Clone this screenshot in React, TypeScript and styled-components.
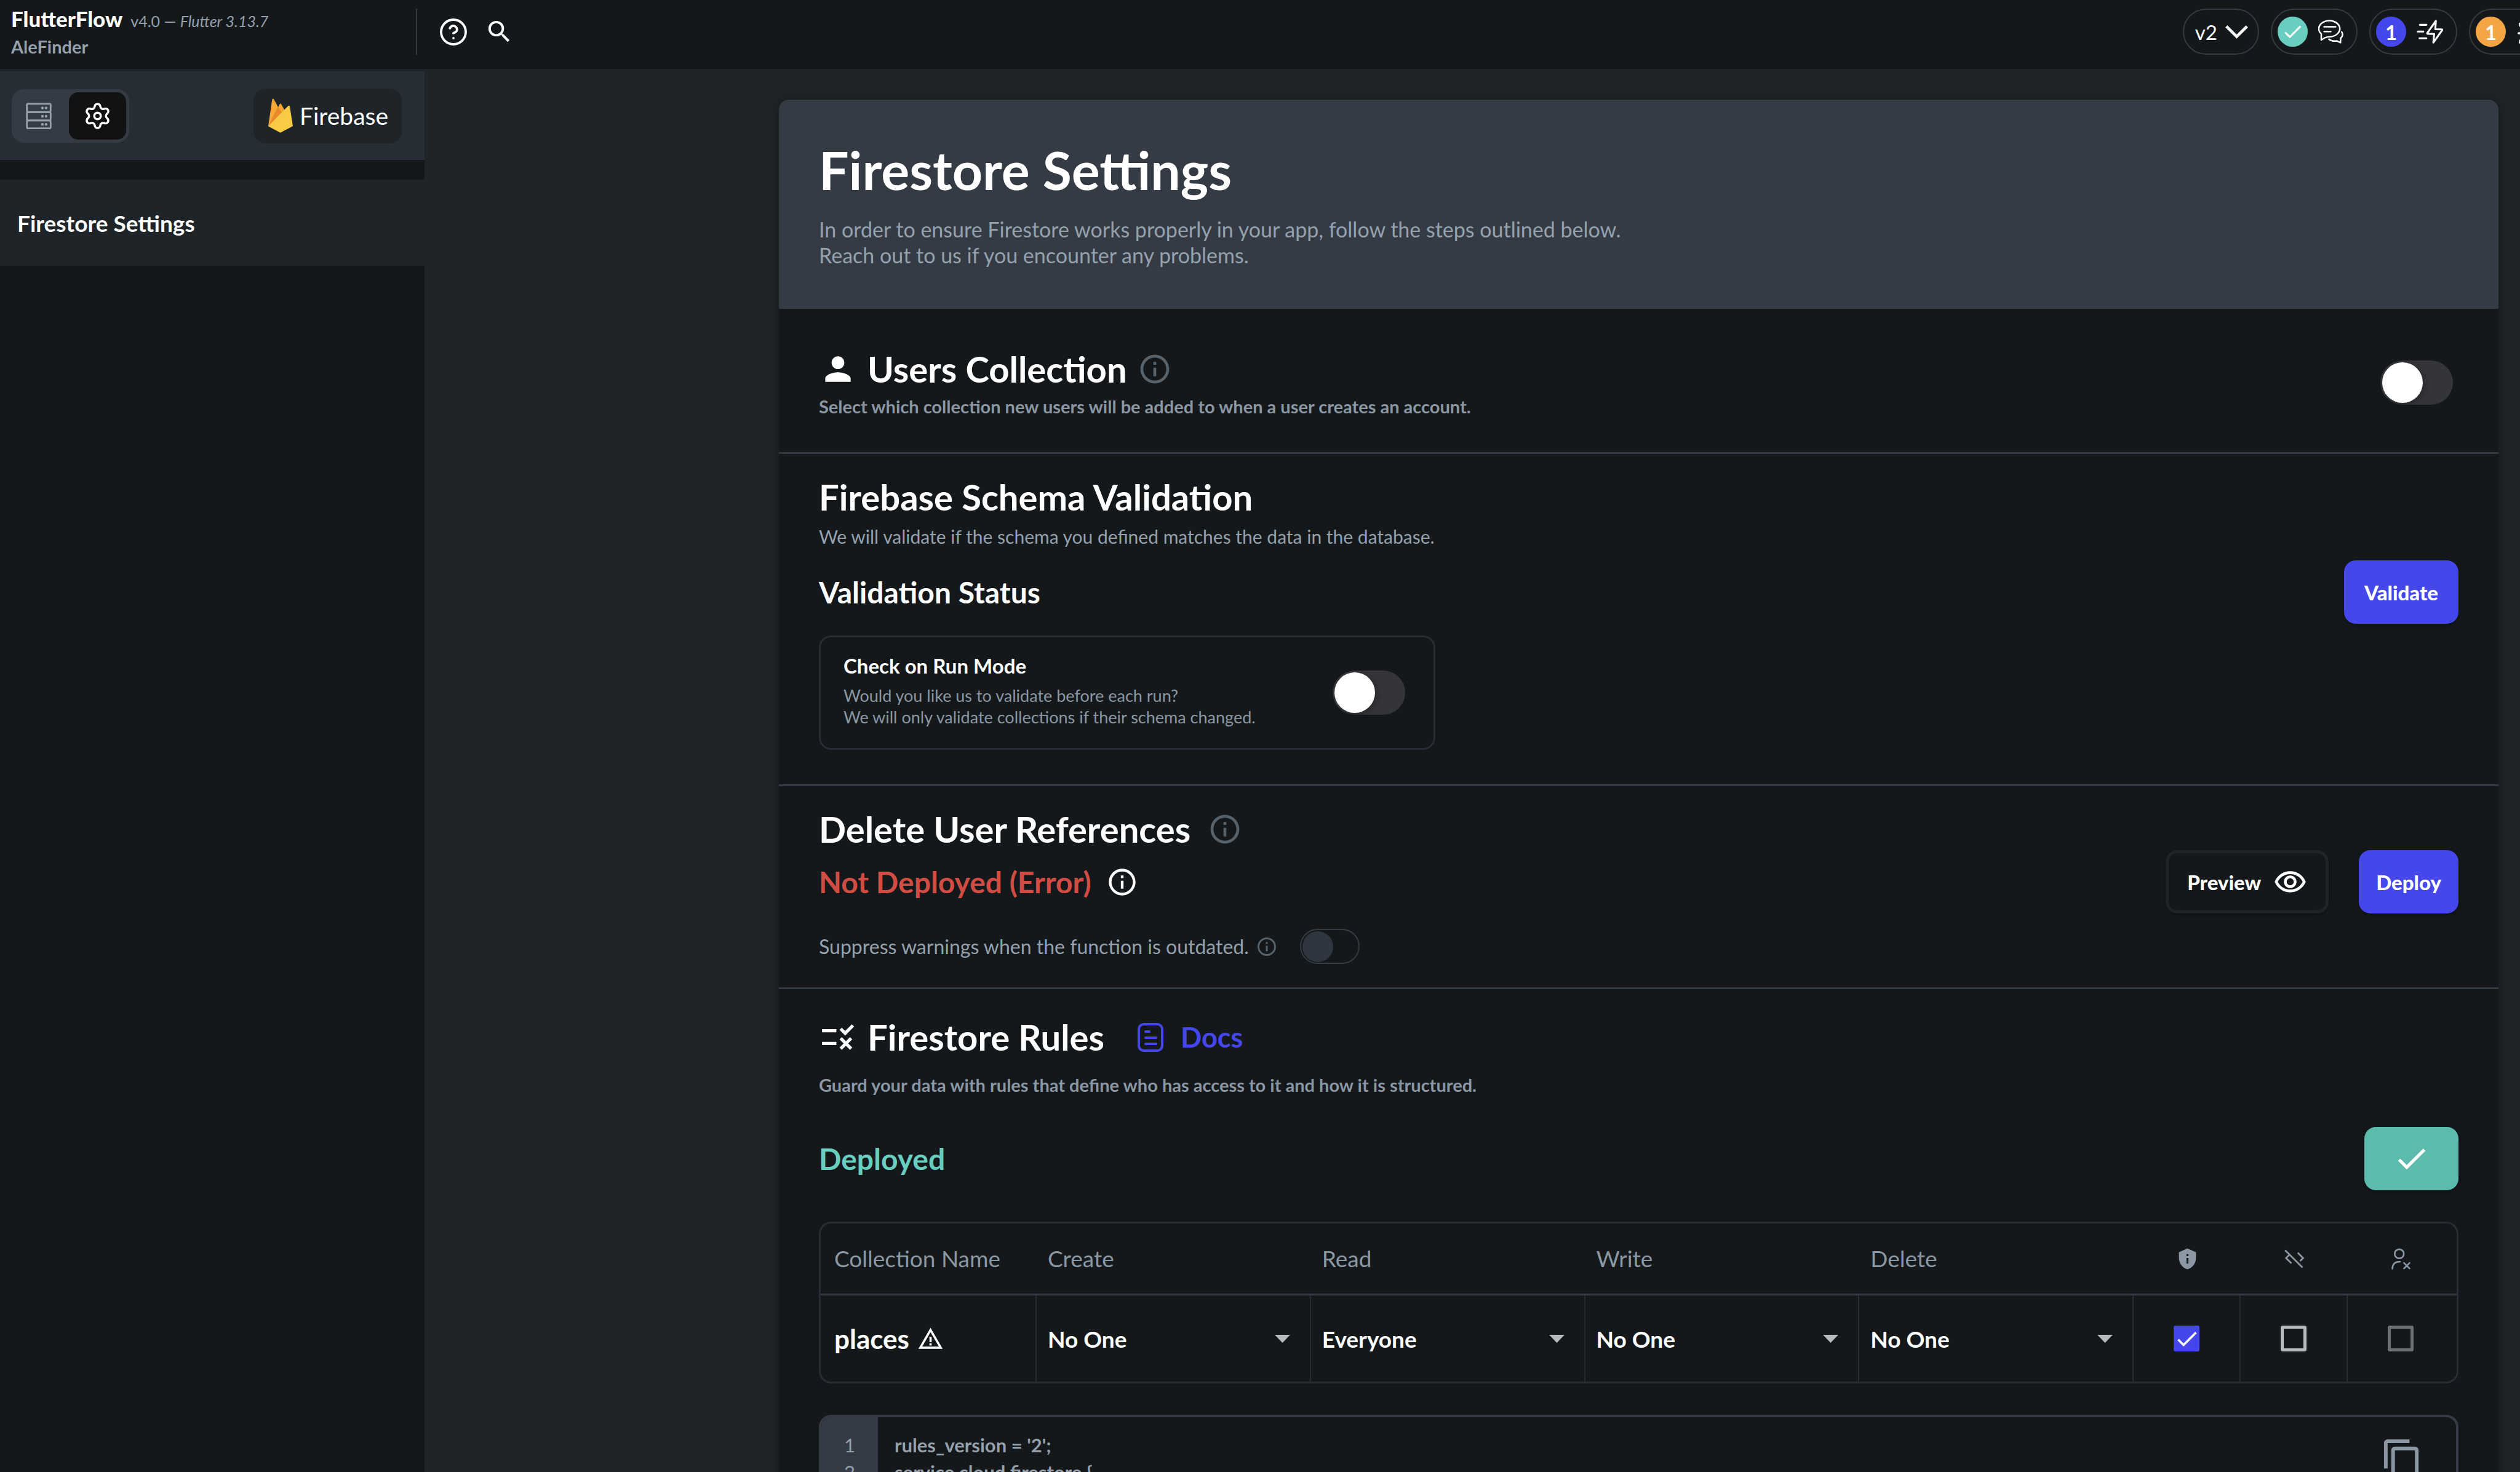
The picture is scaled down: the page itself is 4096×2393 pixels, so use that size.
import React from "react";
import styled, { createGlobalStyle, css } from "styled-components";
import {
  MdCheck,
  MdContentCopy,
  MdInfoOutline,
  MdOutlineRemoveRedEye,
  MdPerson,
  MdPrivacyTip,
  MdRule,
  MdSearch,
  MdWarningAmber,
} from "react-icons/md";
import { Bug, CircleHelp } from "lucide-react";

const color = {
  page: "#1e2428",
  panel: "#14181b",
  header: "#343b45",
  bar: "#262d34",
  line: "#323a43",
  faint: "#262b30",
  text: "#ffffff",
  muted: "#95a1ac",
  soft: "#8b97a2",
  dim: "#57636c",
  primary: "#4547eb",
  teal: "#69cebf",
  tealDark: "#5dbbad",
  orange: "#f3a545",
  red: "#d14c42",
  control: "#b9bbbc",
  disabled: "#6c7072",
};

const GlobalStyle = createGlobalStyle`
  *, *::before, *::after { box-sizing: border-box; }
  body {
    margin: 0;
    background: ${color.page};
    color: ${color.text};
    font-family: Lato, "Open Sans", sans-serif;
  }
  h1, h2, h3, h4, p, ol { margin: 0; padding: 0; }
  button, input, select { font-family: inherit; margin: 0; }
  svg { display: block; flex: none; }
`;

const Shell = styled.div`
  display: flex;
  flex-direction: column;
  height: 100vh;
  overflow: hidden;
`;

/* ---------- top bar ---------- */

const TopBar = styled.header`
  display: flex;
  flex: none;
  height: 112px;
  padding: 14px 0 23px;
  background: ${color.panel};
  overflow: hidden;
`;

const Brand = styled.div`
  display: flex;
  flex-direction: column;
  justify-content: center;
  gap: 8px;
  width: 678px;
  padding-left: 18px;
  border-right: 2px solid ${color.line};
`;

const BrandLine = styled.div`
  display: flex;
  align-items: baseline;
  gap: 13px;
  font-size: 35px;
  line-height: 36px;
  font-weight: 900;
`;

const Version = styled.span`
  font-size: 25px;
  font-weight: 400;
  color: ${color.muted};
`;

const ProjectName = styled.div`
  font-size: 29px;
  line-height: 32px;
  font-weight: 700;
  color: ${color.muted};
`;

const BarTools = styled.div`
  display: flex;
  align-items: center;
  gap: 27px;
  padding-left: 35px;
`;

const IconButton = styled.button`
  display: flex;
  padding: 0;
  border: 0;
  background: none;
  color: ${color.text};
`;

const Pills = styled.div`
  display: flex;
  gap: 19px;
  margin-left: auto;
  margin-right: -63px;
`;

const Pill = styled.button<{ $gap?: number }>`
  display: flex;
  flex: none;
  align-items: center;
  gap: ${(p) => p.$gap ?? 17}px;
  height: 75px;
  padding: 0 21px 0 9px;
  border: 2px solid ${color.line};
  border-radius: 38px;
  background: none;
  color: ${color.text};
  font-size: 33px;
`;

const VersionPill = styled(Pill)`
  padding: 0 16px 0 18px;
`;

const Dot = styled.span<{ $bg: string }>`
  display: flex;
  align-items: center;
  justify-content: center;
  width: 49px;
  height: 49px;
  border-radius: 50%;
  background: ${(p) => p.$bg};
  font-size: 33px;
  font-weight: 700;
`;

/* ---------- sidebar ---------- */

const Body = styled.div`
  display: flex;
  flex: 1;
  min-height: 0;
`;

const Sidebar = styled.aside`
  flex: none;
  width: 690px;
  margin-top: 4px;
  background: ${color.panel};
`;

const SideHeader = styled.div`
  display: flex;
  align-items: center;
  justify-content: space-between;
  height: 144px;
  padding: 0 37px 0 19px;
  background: ${color.bar};
`;

const Segments = styled.div`
  display: flex;
  padding: 5px 5px 5px 0;
  border-radius: 20px;
  background: ${color.header};
`;

const Segment = styled.button<{ $active?: boolean }>`
  display: flex;
  align-items: center;
  justify-content: center;
  width: 93px;
  height: 77px;
  padding: 0;
  border: 0;
  border-radius: 15px;
  background: ${(p) => (p.$active ? "#101213" : "transparent")};
  color: ${(p) => (p.$active ? color.text : color.muted)};
  &:first-child {
    padding-right: 5px;
  }
`;

const FirebaseButton = styled.button`
  display: flex;
  align-items: center;
  gap: 11px;
  height: 89px;
  padding: 0 22px 0 24px;
  border: 0;
  border-radius: 20px;
  background: ${color.page};
  color: ${color.text};
  font-size: 39px;
`;

const SideLink = styled.a`
  display: flex;
  align-items: center;
  height: 140px;
  margin-top: 32px;
  padding: 0 28px;
  background: ${color.page};
  color: ${color.text};
  font-size: 37px;
  font-weight: 700;
  text-decoration: none;
`;

/* ---------- main card ---------- */

const Main = styled.main`
  flex: 1;
  min-width: 0;
  padding: 50px 35px 0 576px;
`;

const Card = styled.div`
  border-radius: 16px 16px 0 0;
  background: ${color.panel};
  box-shadow: 0 0 24px rgba(0, 0, 0, 0.3);
`;

const CardHeader = styled.div`
  padding: 64px 65px 66px;
  border-radius: 16px 16px 0 0;
  background: ${color.header};
`;

const PageTitle = styled.h1`
  font-size: 86px;
  line-height: 100px;
  font-weight: 700;
`;

const Lead = styled.p`
  margin-top: 26px;
  font-size: 34px;
  line-height: 42px;
  color: ${color.muted};
`;

const Section = styled.section<{ $top: number; $bottom: number }>`
  padding: ${(p) => p.$top}px 65px ${(p) => p.$bottom}px;
  border-bottom: 3px solid ${color.line};
`;

const Row = styled.div<{ $mt?: number; $gap?: number }>`
  display: flex;
  align-items: center;
  gap: ${(p) => p.$gap ?? 0}px;
  margin-top: ${(p) => p.$mt ?? 0}px;
`;

const SplitRow = styled(Row)`
  justify-content: space-between;
`;

const SectionTitle = styled.h2`
  font-size: 58px;
  line-height: 68px;
  font-weight: 700;
`;

const StatusText = styled.h3<{ $color?: string }>`
  font-size: 48px;
  line-height: 54px;
  font-weight: 700;
  color: ${(p) => p.$color ?? color.text};
`;

const BoldNote = styled.p<{ $mt: number }>`
  margin-top: ${(p) => p.$mt}px;
  font-size: 29px;
  line-height: 32px;
  font-weight: 700;
  color: ${color.soft};
`;

const Note = styled.p`
  margin-top: 12px;
  font-size: 30px;
  line-height: 36px;
  color: ${color.muted};
`;

const Tint = styled.span<{ $color: string }>`
  display: flex;
  color: ${(p) => p.$color};
`;

const Switch = styled.input.attrs({ type: "checkbox", role: "switch" })<{
  $small?: boolean;
}>`
  appearance: none;
  display: flex;
  align-items: center;
  flex: none;
  ${(p) =>
    p.$small
      ? css`
          width: 97px;
          height: 57px;
          padding: 0 2px;
          border: 2px solid ${color.header};
          border-radius: 29px;
        `
      : css`
          width: 118px;
          height: 72px;
          padding: 0 3px;
          border-radius: 36px;
          background: #353539;
        `}
  &::before {
    content: "";
    width: ${(p) => (p.$small ? 50 : 66)}px;
    height: ${(p) => (p.$small ? 50 : 66)}px;
    border-radius: 50%;
    background: ${(p) => (p.$small ? "#2e3640" : "#ffffff")};
    box-shadow: ${(p) => (p.$small ? "none" : "4px 4px 10px rgba(0, 0, 0, 0.2)")};
  }
`;

const SwitchSlot = styled.div`
  display: flex;
  padding-right: 9px;
`;

const Button = styled.button<{ $bg: string; $pad: number }>`
  display: flex;
  align-items: center;
  justify-content: center;
  height: 103px;
  padding: 0 ${(p) => p.$pad}px;
  border: 0;
  border-radius: 19px;
  background: ${(p) => p.$bg};
  color: ${color.text};
  font-size: 33px;
  font-weight: 900;
  box-shadow: 0 3px 8px rgba(0, 0, 0, 0.25);
`;

const OutlineButton = styled(Button)`
  gap: 20px;
  border: 5px solid ${color.page};
`;

const RunModeBox = styled.div`
  display: flex;
  align-items: center;
  justify-content: space-between;
  width: 1002px;
  margin-top: 19px;
  padding: 26px 46px 26px 37px;
  border: 3px solid ${color.bar};
  border-radius: 20px;
`;

const RunModeText = styled.div`
  padding-bottom: 7px;
`;

const RunModeTitle = styled.label`
  display: block;
  font-size: 33px;
  line-height: 40px;
  font-weight: 700;
`;

const RunModeNote = styled.p`
  margin-top: 11px;
  font-size: 27px;
  line-height: 35px;
  color: ${color.soft};
`;

const SuppressLabel = styled.label`
  display: flex;
  align-items: center;
  gap: 11px;
  font-size: 32px;
  line-height: 40px;
  color: ${color.muted};
`;

const DocsLink = styled.a`
  display: flex;
  align-items: center;
  gap: 28px;
  margin-left: 37px;
  color: ${color.primary};
  font-size: 45px;
  line-height: 54px;
  font-weight: 700;
  text-decoration: none;
`;

const Rules = styled.section`
  padding: 44px 65px 0;
`;

/* ---------- rules table ---------- */

const TableFrame = styled.div`
  margin-top: 51px;
  border: 3px solid ${color.bar};
  border-radius: 20px;
  overflow: hidden;
`;

const Table = styled.table`
  width: 100%;
  table-layout: fixed;
  border-collapse: separate;
  border-spacing: 0;
`;

const Col = styled.col<{ $w?: number }>`
  width: ${(p) => (p.$w ? `${p.$w}px` : "auto")};
`;

const HeadCell = styled.th<{ $center?: boolean; $first?: boolean }>`
  height: 117px;
  padding: 0 0 0 ${(p) => (p.$center ? 0 : p.$first ? 22 : 18)}px;
  border-bottom: 3px solid ${color.line};
  color: ${color.soft};
  font-size: 37px;
  line-height: 44px;
  font-weight: 400;
  text-align: left;
  white-space: nowrap;
`;

const Centered = styled.div<{ $end?: boolean }>`
  display: flex;
  align-items: center;
  justify-content: center;
  padding-right: ${(p) => (p.$end ? 5 : 0)}px;
`;

const Cell = styled.td`
  height: 140px;
  padding: 0;
  border-right: 2px solid ${color.faint};
  &:last-child {
    border-right: 0;
  }
`;

const CollectionName = styled.div`
  display: flex;
  align-items: center;
  gap: 13px;
  padding-left: 22px;
  font-size: 44px;
  line-height: 54px;
  font-weight: 700;
`;

const SelectWrap = styled.div`
  display: grid;
  grid-template-columns: 1fr 57px;
  align-items: center;
  color: ${color.control};
`;

const Select = styled.select`
  appearance: none;
  grid-area: 1 / 1 / 2 / 3;
  width: 100%;
  height: 138px;
  padding: 0 0 0 18px;
  border: 0;
  background: transparent;
  color: ${color.text};
  font-size: 37px;
  font-weight: 700;
`;

const SelectArrow = styled.svg`
  grid-area: 1 / 2 / 2 / 3;
  pointer-events: none;
`;

const CheckMark = styled.label<{ $color: string; $checked?: boolean }>`
  display: grid;
  width: 42px;
  height: 42px;
  border: ${(p) => (p.$checked ? 0 : 5)}px solid ${(p) => p.$color};
  border-radius: 3px;
  background: ${(p) => (p.$checked ? p.$color : "transparent")};
  place-items: center;
  input,
  svg {
    grid-area: 1 / 1;
  }
  input {
    appearance: none;
    width: 100%;
    height: 100%;
  }
`;

/* ---------- code viewer ---------- */

const CodeBox = styled.div`
  display: flex;
  margin-top: 51px;
  height: 620px;
  border: 4px solid ${color.header};
  border-radius: 20px 20px 0 0;
  overflow: hidden;
  font-size: 31px;
  line-height: 44px;
  color: ${color.muted};
`;

const Gutter = styled.ol`
  width: 92px;
  padding: 23px 0 0;
  background: ${color.header};
  list-style: none;
  text-align: center;
`;

const Code = styled.pre`
  flex: 1;
  margin: 0;
  padding: 23px 0 0 27px;
  font-family: inherit;
  font-weight: 700;
`;

const CopyButton = styled(IconButton)`
  align-items: flex-start;
  padding: 33px 52px 0 0;
  color: ${color.soft};
`;

/* ---------- drawings ---------- */

const DatabaseIcon = () => (
  <svg width="42" height="43" viewBox="0 0 132 137" fill="none" stroke="currentColor" strokeWidth="9">
    <rect x="4.5" y="5" width="123" height="43.5" rx="7" />
    <rect x="4.5" y="48.5" width="123" height="43.5" rx="7" />
    <rect x="4.5" y="92" width="123" height="40.5" rx="7" />
    <g fill="currentColor" stroke="none">
      <circle cx="85" cy="27" r="7" />
      <circle cx="104" cy="27" r="7" />
      <circle cx="85" cy="70" r="7" />
      <circle cx="104" cy="70" r="7" />
      <circle cx="85" cy="112" r="7" />
      <circle cx="104" cy="112" r="7" />
    </g>
  </svg>
);

const GearIcon = () => (
  <svg width="47" height="47" viewBox="0 0 24 24" fill="none" stroke="currentColor" strokeWidth="1.8" strokeLinejoin="round">
    <path d="M9.671 4.136a2.34 2.34 0 0 1 4.659 0 2.34 2.34 0 0 0 3.319 1.915 2.34 2.34 0 0 1 2.33 4.033 2.34 2.34 0 0 0 0 3.831 2.34 2.34 0 0 1-2.33 4.033 2.34 2.34 0 0 0-3.319 1.915 2.34 2.34 0 0 1-4.659 0 2.34 2.34 0 0 0-3.32-1.915 2.34 2.34 0 0 1-2.33-4.033 2.34 2.34 0 0 0 0-3.831A2.34 2.34 0 0 1 6.35 6.051a2.34 2.34 0 0 0 3.319-1.915" />
    <circle cx="12" cy="12" r="2.7" />
  </svg>
);

const FirebaseLogo = () => (
  <svg width="40" height="56" viewBox="0 0 130 180">
    <path d="M0 145 21 4Q25-3 30 4L56 52 40 110Z" fill="#f5a835" />
    <path d="M48 54 60 30Q65 23 69 30L88 64 60 100Z" fill="#f3a433" />
    <path d="M0 145 51 43 74 78Z" fill="#e8892b" />
    <path d="M0 146 105 39Q112 35 114 42L130 145 64 180Z" fill="#f8cb45" />
  </svg>
);

const ChevronIcon = () => (
  <svg width="37" height="22" viewBox="0 0 115 69" fill="none" stroke="currentColor" strokeWidth="15">
    <path d="M5 6 57.5 58 110 6" />
  </svg>
);

const ChatIcon = () => (
  <svg width="41" height="39" viewBox="0 0 132 125" fill="none" stroke="currentColor" strokeWidth="8" strokeLinecap="round" strokeLinejoin="round">
    <path d="M16 74V106L36 94Q48 89 60 89A55 42 0 1 0 16 74Z" />
    <path d="M31 37H91M31 62H66" />
    <path d="M123 64Q134 82 117 97V120L98 111Q72 115 56 102" />
  </svg>
);

const BoltIcon = () => (
  <svg width="43" height="39" viewBox="0 0 139 124" fill="none" stroke="currentColor" strokeWidth="10" strokeLinecap="round" strokeLinejoin="round">
    <path d="M17 26H51M6 61H35M15 97H51" />
    <path d="M101 5 56 69Q54 73 58 73L92 74 88 119 134 54Q136 50 132 50L98 49Z" />
  </svg>
);

const DocIcon = () => (
  <svg width="42" height="47" viewBox="0 0 42 47" fill="none" stroke="currentColor" strokeWidth="4" strokeLinecap="round">
    <rect x="2" y="2" width="38" height="43" rx="8" />
    <path d="M13 14H19M13 24H30M13 34H30" />
  </svg>
);

const CodeOffIcon = () => (
  <svg width="32" height="31" viewBox="0 0 103 98" fill="none" stroke="currentColor" strokeWidth="9">
    <path d="M4 4 95 94M27 26 9 45 37 72M70 17 98 45 82 60" />
  </svg>
);

const UserOffIcon = () => (
  <svg width="31" height="35" viewBox="0 0 100 111" fill="none" stroke="currentColor" strokeWidth="8.5" strokeLinecap="round">
    <circle cx="41" cy="29" r="24" />
    <path d="M5 107Q6 70 45 70M66 77 95 106M95 77 66 106" />
  </svg>
);

/* ---------- parts ---------- */

const PERMISSIONS = [
  { name: "Create", value: "No One" },
  { name: "Read", value: "Everyone" },
  { name: "Write", value: "No One" },
  { name: "Delete", value: "No One" },
];

function PermissionSelect({ name, value }: { name: string; value: string }) {
  return (
    <SelectWrap>
      <Select aria-label={`${name} permission`} defaultValue={value}>
        <option>No One</option>
        <option>Everyone</option>
      </Select>
      <SelectArrow width="25" height="13" viewBox="0 0 25 13" fill="currentColor">
        <path d="M0 0H25L12.5 13Z" />
      </SelectArrow>
    </SelectWrap>
  );
}

function TopNav() {
  return (
    <TopBar>
      <Brand>
        <BrandLine>
          FlutterFlow
          <Version>
            v4.0 — <em>Flutter 3.13.7</em>
          </Version>
        </BrandLine>
        <ProjectName>AleFinder</ProjectName>
      </Brand>
      <BarTools>
        <IconButton aria-label="Help">
          <CircleHelp size={48} strokeWidth={1.9} />
        </IconButton>
        <IconButton aria-label="Search">
          <MdSearch size={47} />
        </IconButton>
      </BarTools>
      <Pills>
        <VersionPill $gap={13}>
          v2
          <ChevronIcon />
        </VersionPill>
        <Pill aria-label="Comments">
          <Dot $bg={color.teal}>
            <MdCheck size={37} />
          </Dot>
          <ChatIcon />
        </Pill>
        <Pill>
          <Dot $bg={color.primary}>1</Dot>
          <BoltIcon />
        </Pill>
        <Pill>
          <Dot $bg={color.orange}>1</Dot>
          <Bug size={46} strokeWidth={1.8} />
        </Pill>
      </Pills>
    </TopBar>
  );
}

function SideNav() {
  return (
    <Sidebar>
      <SideHeader>
        <Segments>
          <Segment aria-label="Collections">
            <DatabaseIcon />
          </Segment>
          <Segment aria-label="Settings" $active>
            <GearIcon />
          </Segment>
        </Segments>
        <FirebaseButton>
          <FirebaseLogo />
          Firebase
        </FirebaseButton>
      </SideHeader>
      <SideLink href="#settings">Firestore Settings</SideLink>
    </Sidebar>
  );
}

function RulesTable() {
  return (
    <TableFrame>
      <Table>
        <colgroup>
          <Col $w={351} />
          <Col />
          <Col />
          <Col />
          <Col />
          <Col $w={174} />
          <Col $w={174} />
          <Col $w={177} />
        </colgroup>
        <thead>
          <tr>
            <HeadCell $first>Collection Name</HeadCell>
            {PERMISSIONS.map((p) => (
              <HeadCell key={p.name}>{p.name}</HeadCell>
            ))}
            <HeadCell $center aria-label="Private">
              <Centered>
                <MdPrivacyTip size={37} />
              </Centered>
            </HeadCell>
            <HeadCell $center aria-label="Exclude from code">
              <Centered>
                <CodeOffIcon />
              </Centered>
            </HeadCell>
            <HeadCell $center aria-label="Remove on user delete">
              <Centered $end>
                <UserOffIcon />
              </Centered>
            </HeadCell>
          </tr>
        </thead>
        <tbody>
          <tr>
            <Cell>
              <CollectionName>
                places
                <MdWarningAmber size={43} />
              </CollectionName>
            </Cell>
            {PERMISSIONS.map((p) => (
              <Cell key={p.name}>
                <PermissionSelect {...p} />
              </Cell>
            ))}
            <Cell>
              <Centered>
                <CheckMark $color={color.primary} $checked>
                  <input type="checkbox" defaultChecked aria-label="Private" />
                  <MdCheck size={43} />
                </CheckMark>
              </Centered>
            </Cell>
            <Cell>
              <Centered>
                <CheckMark $color={color.control}>
                  <input type="checkbox" aria-label="Exclude from code" />
                </CheckMark>
              </Centered>
            </Cell>
            <Cell>
              <Centered $end>
                <CheckMark $color={color.disabled}>
                  <input type="checkbox" disabled aria-label="Remove on user delete" />
                </CheckMark>
              </Centered>
            </Cell>
          </tr>
        </tbody>
      </Table>
    </TableFrame>
  );
}

export default function App() {
  return (
    <Shell>
      <GlobalStyle />
      <TopNav />
      <Body>
        <SideNav />
        <Main>
          <Card>
            <CardHeader>
              <PageTitle>Firestore Settings</PageTitle>
              <Lead>
                In order to ensure Firestore works properly in your app, follow the steps outlined below.
                <br />
                Reach out to us if you encounter any problems.
              </Lead>
            </CardHeader>

            <Section $top={64} $bottom={58}>
              <SplitRow>
                <div>
                  <Row $gap={17}>
                    <MdPerson size={62} />
                    <SectionTitle>Users Collection</SectionTitle>
                    <Tint $color={color.dim}>
                      <MdInfoOutline size={56} />
                    </Tint>
                  </Row>
                  <BoldNote $mt={11}>
                    Select which collection new users will be added to when a user creates an account.
                  </BoldNote>
                </div>
                <SwitchSlot>
                  <Switch aria-label="Users Collection" />
                </SwitchSlot>
              </SplitRow>
            </Section>

            <Section $top={36} $bottom={56}>
              <SectionTitle>Firebase Schema Validation</SectionTitle>
              <Note>We will validate if the schema you defined matches the data in the database.</Note>
              <SplitRow $mt={21}>
                <StatusText>Validation Status</StatusText>
                <Button $bg={color.primary} $pad={33}>
                  Validate
                </Button>
              </SplitRow>
              <RunModeBox>
                <RunModeText>
                  <RunModeTitle htmlFor="run-mode">Check on Run Mode</RunModeTitle>
                  <RunModeNote>
                    Would you like us to validate before each run?
                    <br />
                    We will only validate collections if their schema changed.
                  </RunModeNote>
                </RunModeText>
                <Switch id="run-mode" />
              </RunModeBox>
            </Section>

            <Section $top={36} $bottom={38}>
              <Row $gap={28}>
                <SectionTitle>Delete User References</SectionTitle>
                <Tint $color={color.dim}>
                  <MdInfoOutline size={56} />
                </Tint>
              </Row>
              <SplitRow>
                <Row $gap={24}>
                  <StatusText $color={color.red}>Not Deployed (Error)</StatusText>
                  <MdInfoOutline size={52} />
                </Row>
                <Row $gap={49}>
                  <OutlineButton $bg={color.panel} $pad={30}>
                    Preview
                    <MdOutlineRemoveRedEye size={55} />
                  </OutlineButton>
                  <Button $bg={color.primary} $pad={28}>
                    Deploy
                  </Button>
                </Row>
              </SplitRow>
              <Row $mt={25} $gap={36}>
                <SuppressLabel htmlFor="suppress">
                  Suppress warnings when the function is outdated.
                  <Tint $color={color.dim}>
                    <MdInfoOutline size={36} />
                  </Tint>
                </SuppressLabel>
                <Switch id="suppress" $small />
              </Row>
            </Section>

            <Rules>
              <Row $gap={17}>
                <MdRule size={62} />
                <SectionTitle>Firestore Rules</SectionTitle>
                <DocsLink href="#docs">
                  <DocIcon />
                  Docs
                </DocsLink>
              </Row>
              <BoldNote $mt={28}>
                Guard your data with rules that define who has access to it and how it is structured.
              </BoldNote>
              <SplitRow $mt={52}>
                <StatusText $color={color.teal}>Deployed</StatusText>
                <Button $bg={color.tealDark} $pad={46} aria-label="Deployed">
                  <MdCheck size={61} />
                </Button>
              </SplitRow>
              <RulesTable />
              <CodeBox>
                <Gutter>
                  <li>1</li>
                  <li>2</li>
                </Gutter>
                <Code>{"rules_version = '2';\nservice cloud.firestore {"}</Code>
                <CopyButton aria-label="Copy rules">
                  <MdContentCopy size={71} />
                </CopyButton>
              </CodeBox>
            </Rules>
          </Card>
        </Main>
      </Body>
    </Shell>
  );
}
